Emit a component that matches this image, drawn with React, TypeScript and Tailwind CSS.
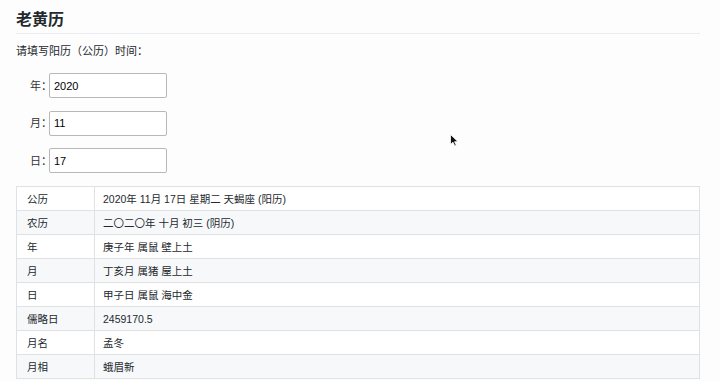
const rows: [string, string][] = [
  ['公历', '2020年 11月 17日 星期二 天蝎座 (阳历)'],
  ['农历', '二〇二〇年 十月 初三 (阴历)'],
  ['年', '庚子年 属鼠 壁上土'],
  ['月', '丁亥月 属猪 屋上土'],
  ['日', '甲子日 属鼠 海中金'],
  ['儒略日', '2459170.5'],
  ['月名', '孟冬'],
  ['月相', '蛾眉新'],
];

const fields: [string, string][] = [
  ['年', '2020'],
  ['月', '11'],
  ['日', '17'],
];

export default function App() {
  return (
    <div
      className="relative h-[381px] w-[720px] overflow-hidden bg-[#fdfdfd] pl-4 pr-5 pt-2 text-[#24292e]"
      style={{ fontFamily: '"Liberation Sans", "Noto Sans CJK SC", sans-serif' }}
    >
      <h1 className="border-b border-[#eaecef] pb-[1px] text-[16px] font-bold leading-[24px]">老黄历</h1>

      <p className="mt-[9px] text-[11px] leading-[16px]">请填写阳历（公历）时间：</p>

      <div className="mt-[14px] flex flex-col gap-[12.5px] pl-[14px]">
        {fields.map(([label, value]) => (
          <div key={label} className="flex items-center">
            <span className="mr-[-3px] whitespace-nowrap text-[11px] leading-[16px] text-[#333]">{label}：</span>
            <input
              readOnly
              value={value}
              className="relative h-[25px] w-[118px] rounded-[2px] border border-[#b8b8b8] bg-white px-[4px] text-[11px] text-black outline-none"
            />
          </div>
        ))}
      </div>

      <table className="mt-[13px] w-[684px] border-collapse text-[10.5px] leading-[16px]">
        <tbody>
          {rows.map(([k, v], i) => (
            <tr key={k} className={i % 2 === 1 ? 'bg-[#f6f8fa]' : 'bg-white'}>
              <td className="h-[24px] w-[78px] border border-[#dfe2e5] px-[10px] py-0">{k}</td>
              <td className="h-[24px] border border-[#dfe2e5] px-[8px] py-0">{v}</td>
            </tr>
          ))}
        </tbody>
      </table>

      {/* mouse pointer */}
      <svg className="absolute left-[450px] top-[134px]" width="9" height="13" viewBox="0 0 9 13">
        <path d="M0.5 0.5 L0.5 10.5 L3 8.2 L4.8 12 L6.3 11.3 L4.6 7.7 L8 7.7 Z" fill="#111" stroke="#fff" strokeWidth="0.8" />
      </svg>
    </div>
  );
}
